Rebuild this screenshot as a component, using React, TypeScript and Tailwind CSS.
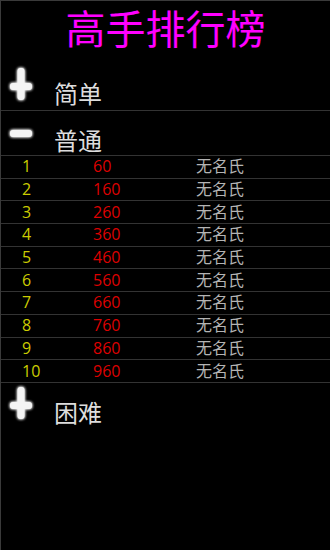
const FONT = { fontFamily: '"Open Sans", "Noto Sans CJK SC", sans-serif' };

const ROWS = Array.from({ length: 10 }, (_, i) => ({
  rank: i + 1,
  score: 60 + i * 100,
  name: "无名氏",
}));

function GlowIcon({ open }: { open: boolean }) {
  const id = open ? "glow-minus" : "glow-plus";
  return (
    <svg width="34" height="40" viewBox="0 0 34 40" className="shrink-0">
      <defs>
        <filter id={id} x="-50%" y="-50%" width="200%" height="200%">
          <feGaussianBlur stdDeviation="1.8" result="b" />
          <feMerge>
            <feMergeNode in="b" />
            <feMergeNode in="b" />
            <feMergeNode in="SourceGraphic" />
          </feMerge>
        </filter>
      </defs>
      <g filter={`url(#${id})`} fill="#f4f4f4">
        <rect x="6" y="19" width="22" height="7" rx="3" />
        {!open && <rect x="13.5" y="4" width="7" height="32" rx="3" />}
      </g>
    </svg>
  );
}

function GroupHeader({
  label,
  open,
  height,
  border = true,
}: {
  label: string;
  open: boolean;
  height: string;
  border?: boolean;
}) {
  return (
    <div className={`flex shrink-0 items-start ${border ? "border-b border-[#333]" : ""} ${height}`}>
      <div className="ml-[3px]">
        <GlowIcon open={open} />
      </div>
      <span className="ml-[16px] mt-[18px] text-[24px] leading-[24px] text-[#dddddd]">{label}</span>
    </div>
  );
}

export default function App() {
  return (
    <div
      className="flex h-[550px] w-[330px] flex-col overflow-hidden border-l border-t border-[#3a3a3a] bg-black"
      style={FONT}
    >
      <div className="flex h-[63px] shrink-0 justify-center pt-[8px]">
        <span className="text-[40px] leading-[40px] text-[#ff00ff]">高手排行榜</span>
      </div>

      <GroupHeader label="简单" open={false} height="h-[47px]" />
      <GroupHeader label="普通" open={true} height="h-[45px]" />

      {ROWS.map((r) => (
        <div
          key={r.rank}
          className="flex h-[22.7px] shrink-0 items-center border-b border-[#333] pb-[1px] text-[16px] leading-[16px]"
        >
          <span className="w-[92px] pl-[21px] text-[#cccc00]">{r.rank}</span>
          <span className="w-[103px] text-[#dd0000]">{r.score}</span>
          <span className="text-[#b4b4b4]">{r.name}</span>
        </div>
      ))}

      <GroupHeader label="困难" open={false} height="h-[47px]" border={false} />
    </div>
  );
}
